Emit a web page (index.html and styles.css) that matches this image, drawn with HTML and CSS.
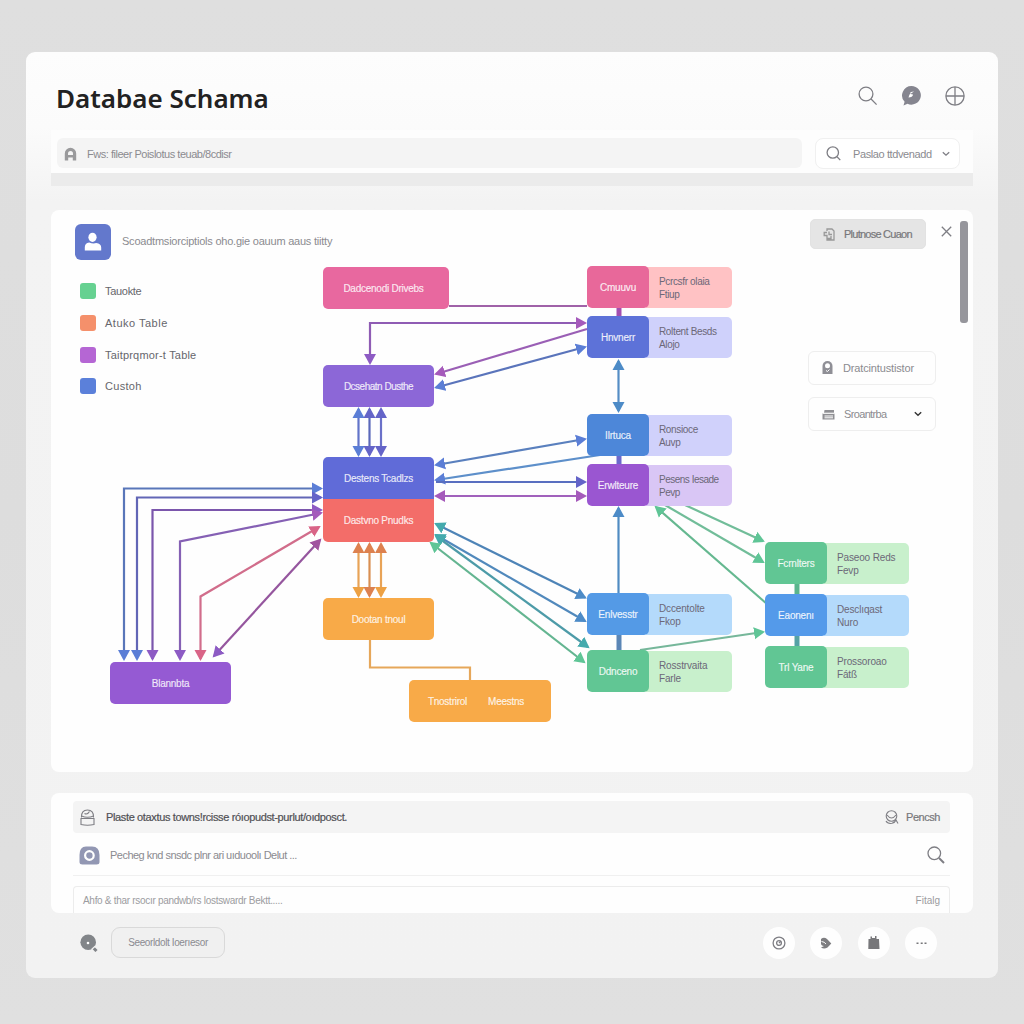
FILE: index.html
```html
<!DOCTYPE html>
<html lang="en">
<head>
<meta charset="utf-8">
<title>Databae Schama</title>
<link rel="stylesheet" href="styles.css">
</head>
<body>
<div class="window">
  <header class="header">
    <h1 class="title">Databae Schama</h1>
    <div class="header-icons">
      <svg width="20" height="20" viewBox="0 0 20 20"><circle cx="8" cy="8" r="6.900" class="line"/><path d="M12.800 12.800L18.600 18.600" class="line"/></svg>
      <svg width="21" height="21" viewBox="0 0 21 21"><path d="M10.500 1a9.500 9.300 0 1 1-4 17.800L2.500 20.500 3.600 16.800A9.400 9.400 0 0 1 10.500 1z" fill="#85858f"/><path d="M13 6.500C8 7 8 9 12 9.500c0 2-2 3-4.500 3l1-3" fill="#fff"/></svg>
      <svg width="20" height="20" viewBox="0 0 20 20"><circle cx="10" cy="10" r="9.100" class="line"/><path d="M10 1v18M1 10h18" class="line"/></svg>
    </div>
  </header>

  <div class="toolbar">
    <div class="search">
      <svg width="13" height="14" viewBox="0 0 13 14"><path d="M.8 13.500V6.500a5.700 5.700 0 0 1 11.400 0v7H8.800v-3H4.200v3z" fill="#9a9a9c"/><path d="M4 8V6.500a2.500 2.500 0 0 1 5 0V8z" fill="#f5f5f5"/></svg>
      <span class="t-search">Fws: fileer Poislotus teuab/8cdisr</span>
    </div>
    <div class="filter">
      <svg width="15" height="15" viewBox="0 0 15 15"><circle cx="6.800" cy="6.500" r="5.700" class="line"/><path d="M11 10.800l3.300 3.300" class="line"/></svg>
      <span class="t-filter">Paslao ttdvenadd</span>
      <svg width="8" height="6" viewBox="0 0 8 6"><path d="M.8 1.200L4 4.200 7.200 1.200" class="line"/></svg>
    </div>
  </div>
  <div class="strip"></div>

  <main class="panel">
    <div class="panel-top">
      <div class="user-badge"><svg width="18" height="20" viewBox="0 0 18 20"><ellipse cx="8.500" cy="5.300" rx="4.100" ry="4.600" fill="#fff"/><path d="M.8 18.500v-3.300q0-4 4.400-4.700 4 1.500 7 .5 5 .6 5 4.500v3z" fill="#fff"/></svg></div>
      <span class="t-sub">Scoadtmsiorciptiols oho.gie oauum aaus tiitty</span>
      <button class="primary"><svg width="12" height="13" viewBox="0 0 12 13"><path d="M4 3V1h5l2 2v9H4V9M4 4.500H1.200v3H4v3h4V8M6 3.500v3h3" class="line gear"/></svg><span class="t-primary">Plutnose Cuaon</span></button>
      <svg class="close" width="11" height="11" viewBox="0 0 11 11"><path d="M.8.8l9.400 9.400M10.200.8L.8 10.200" class="line"/></svg>
      <div class="scroll"></div>
    </div>
    <div class="panel-body">
      <ul class="legend">
        <li><i class="green"></i><span class="lg1">Tauokte</span></li>
        <li><i class="coral"></i><span class="lg2">Atuko Table</span></li>
        <li><i class="violet"></i><span class="lg3">Taitprqmor-t Table</span></li>
        <li><i class="azure"></i><span class="lg4">Custoh</span></li>
      </ul>
      <div class="side">
        <div class="side-box"><svg width="11" height="14" viewBox="0 0 11 14"><path d="M.5 13V5a5 5 0 0 1 10 0v8z" fill="#8f8f96"/><circle cx="5.500" cy="4.700" r="2.500" fill="#fff"/><path d="M4 9.500l1.500 1 2-2" stroke="#fff" fill="none"/></svg><span class="s1">Dratcintustistor</span></div>
        <div class="side-box"><svg width="13" height="11" viewBox="0 0 13 11"><path d="M2.500 1h9.500v3H2zM.5 4.500h12v6H.5z" fill="#8f8f93"/><path d="M2.500 7h8.500M1 4.200h11.500M2.500 8.800h8.500" stroke="#fff"/></svg><span class="s2">Sroantrba</span><svg class="chev" width="8" height="6" viewBox="0 0 8 6"><path d="M.8 1.200L4 4.200 7.200 1.200" fill="none" stroke="#333" stroke-width="1.400"/></svg></div>
      </div>
    </div>

    <svg class="wires" width="922" height="562" viewBox="51 210 922 562">
      <defs>
        <marker id="a-blue" markerUnits="userSpaceOnUse" markerWidth="12" markerHeight="14" refX="9" refY="6.500" orient="auto-start-reverse"><path d="M0 .5L11 6.500 0 12.500z" fill="#5b7ed6"/></marker>
        <marker id="a-indigo" markerUnits="userSpaceOnUse" markerWidth="12" markerHeight="14" refX="9" refY="6.500" orient="auto-start-reverse"><path d="M0 .5L11 6.500 0 12.500z" fill="#6464c8"/></marker>
        <marker id="a-purple" markerUnits="userSpaceOnUse" markerWidth="12" markerHeight="14" refX="9" refY="6.500" orient="auto-start-reverse"><path d="M0 .5L11 6.500 0 12.500z" fill="#8d5bc4"/></marker>
        <marker id="a-violet" markerUnits="userSpaceOnUse" markerWidth="12" markerHeight="14" refX="9" refY="6.500" orient="auto-start-reverse"><path d="M0 .5L11 6.500 0 12.500z" fill="#a55abb"/></marker>
        <marker id="a-plum" markerUnits="userSpaceOnUse" markerWidth="12" markerHeight="14" refX="9" refY="6.500" orient="auto-start-reverse"><path d="M0 .5L11 6.500 0 12.500z" fill="#a0539f"/></marker>
        <marker id="a-rose" markerUnits="userSpaceOnUse" markerWidth="12" markerHeight="14" refX="9" refY="6.500" orient="auto-start-reverse"><path d="M0 .5L11 6.500 0 12.500z" fill="#d96487"/></marker>
        <marker id="a-orange" markerUnits="userSpaceOnUse" markerWidth="12" markerHeight="14" refX="9" refY="6.500" orient="auto-start-reverse"><path d="M0 .5L11 6.500 0 12.500z" fill="#eda144"/></marker>
        <marker id="a-rust" markerUnits="userSpaceOnUse" markerWidth="12" markerHeight="14" refX="9" refY="6.500" orient="auto-start-reverse"><path d="M0 .5L11 6.500 0 12.500z" fill="#dd814f"/></marker>
        <marker id="a-steel" markerUnits="userSpaceOnUse" markerWidth="12" markerHeight="14" refX="9" refY="6.500" orient="auto-start-reverse"><path d="M0 .5L11 6.500 0 12.500z" fill="#4d8bc7"/></marker>
        <marker id="a-teal" markerUnits="userSpaceOnUse" markerWidth="12" markerHeight="14" refX="9" refY="6.500" orient="auto-start-reverse"><path d="M0 .5L11 6.500 0 12.500z" fill="#44aaad"/></marker>
        <marker id="a-green" markerUnits="userSpaceOnUse" markerWidth="12" markerHeight="14" refX="9" refY="6.500" orient="auto-start-reverse"><path d="M0 .5L11 6.500 0 12.500z" fill="#5fc596"/></marker>
      </defs>
      <g fill="none" stroke-width="2.200">
        <path d="M449 306H587" stroke="#a062a8"/>
        <path d="M370 363V323H585" stroke="#8f5cb4" marker-start="url(#a-purple)" marker-end="url(#a-violet)"/>
        <path d="M587 329L436 374" stroke="#9a5fb5" marker-end="url(#a-violet)"/>
        <path d="M585 347L436 387.500" stroke="#5a74bb" marker-start="url(#a-blue)" marker-end="url(#a-blue)"/>
        <path d="M358.500 409V455" stroke="#6274c9" marker-start="url(#a-blue)" marker-end="url(#a-blue)"/>
        <path d="M369.500 409V455" stroke="#5a68ba" marker-start="url(#a-indigo)" marker-end="url(#a-indigo)"/>
        <path d="M381 409V455" stroke="#6a70c8" marker-start="url(#a-indigo)" marker-end="url(#a-indigo)"/>
        <path d="M436 465L585 439" stroke="#5a80be" marker-start="url(#a-blue)" marker-end="url(#a-blue)"/>
        <path d="M436 480L600 455" stroke="#5d8fca" marker-start="url(#a-blue)"/>
        <path d="M436 482H585" stroke="#596fc0" marker-end="url(#a-indigo)"/>
        <path d="M436 496H585" stroke="#a161bc" marker-start="url(#a-violet)" marker-end="url(#a-violet)"/>
        <path d="M124 659V488.500H321" stroke="#5976b9" marker-start="url(#a-blue)" marker-end="url(#a-blue)"/>
        <path d="M137 659V497.500H321" stroke="#6266b6" marker-start="url(#a-blue)" marker-end="url(#a-indigo)"/>
        <path d="M152.500 659V510H321" stroke="#7b56ac" marker-start="url(#a-purple)" marker-end="url(#a-purple)"/>
        <path d="M180 659V541.500L321 513" stroke="#8560b4" marker-start="url(#a-purple)" marker-end="url(#a-violet)"/>
        <path d="M200.500 659V596.500L319 527" stroke="#d16d8b" marker-start="url(#a-rose)" marker-end="url(#a-rose)"/>
        <path d="M214 656L320 540" stroke="#95569e" marker-start="url(#a-purple)" marker-end="url(#a-plum)"/>
        <path d="M358.500 544V596" stroke="#e8a357" marker-start="url(#a-rust)" marker-end="url(#a-orange)"/>
        <path d="M369.500 544V596" stroke="#d98f52" marker-start="url(#a-rust)" marker-end="url(#a-rust)"/>
        <path d="M381 544V596" stroke="#e8a357" marker-start="url(#a-rust)" marker-end="url(#a-orange)"/>
        <path d="M370 640V667.500H470V680" stroke="#e6a75a"/>
        <path d="M618.500 361V411" stroke="#558dc5" marker-start="url(#a-steel)" marker-end="url(#a-steel)"/>
        <path d="M618.500 594V508" stroke="#508bc2" marker-end="url(#a-steel)"/>
        <path d="M436 524L585 597.500" stroke="#4e84b7" marker-start="url(#a-teal)" marker-end="url(#a-steel)"/>
        <path d="M436 535L585 621" stroke="#5189bc" marker-start="url(#a-teal)" marker-end="url(#a-steel)"/>
        <path d="M436 536L588 647" stroke="#4d9ba8" marker-start="url(#a-teal)" marker-end="url(#a-teal)"/>
        <path d="M431 543L584 662" stroke="#64b591" marker-start="url(#a-green)" marker-end="url(#a-green)"/>
        <path d="M685 505L763 541" stroke="#71bd99" marker-end="url(#a-green)"/>
        <path d="M665 505L763 562" stroke="#71bd99" marker-end="url(#a-green)"/>
        <path d="M656 507L767 604" stroke="#65b890" marker-start="url(#a-green)"/>
        <path d="M640 650L763 632" stroke="#76b79a" marker-end="url(#a-green)"/>
        <path d="M619 308V317" stroke="#a44fb0" stroke-width="5"/>
        <path d="M619 456V465" stroke="#6c69cc" stroke-width="5"/>
        <path d="M619 635V651" stroke="#5b86b6" stroke-width="5"/>
        <path d="M797 583V595" stroke="#5ab58d" stroke-width="5"/>
        <path d="M797 636V647" stroke="#55a2a5" stroke-width="5"/>
      </g>
    </svg>

    <div class="node n1"><span>Dadcenodi Drivebs</span></div>
    <div class="node n2"><span>Dcsehatn Dusthe</span></div>
    <div class="node n3"><span>Destens Tcadlzs</span></div>
    <div class="node n4"><span>Dastvno Pnudks</span></div>
    <div class="node n5"><span>Dootan tnoul</span></div>
    <div class="node n6"><span>Tnostrirol</span><span>Meestns</span></div>
    <div class="node n7"><span>Blannbta</span></div>

    <div class="pair p1"><b>Cmuuvu</b><p><span>Pcrcsfr olaia</span><br><span>Ftiup</span></p></div>
    <div class="pair p2"><b>Hnvnerr</b><p><span>Roltent Besds</span><br><span>Alojo</span></p></div>
    <div class="pair p3"><b>Ilrtuca</b><p><span>Ronsioce</span><br><span>Auvp</span></p></div>
    <div class="pair p4"><b>Erwlteure</b><p><span>Pesens Iesade</span><br><span>Pevp</span></p></div>
    <div class="pair p5"><b>Enlvesstr</b><p><span>Dccentolte</span><br><span>Fkop</span></p></div>
    <div class="pair p6"><b>Ddnceno</b><p><span>Rosstrvaita</span><br><span>Farle</span></p></div>
    <div class="pair p7"><b>Fcrnlters</b><p><span>Paseoo Reds</span><br><span>Fevp</span></p></div>
    <div class="pair p8"><b>Eaonenı</b><p><span>Desclıqast</span><br><span>Nuro</span></p></div>
    <div class="pair p9"><b>Trl Yane</b><p><span>Prossoroao</span><br><span>Fátß</span></p></div>
  </main>

  <section class="log">
    <div class="row row-head">
      <svg width="15" height="17" viewBox="0 0 15 17"><path d="M1.500 8.500Q1.200 1 7.500 1t6 7.500M1.500 7Q7.500 9.500 13.500 7M1 9.500h13v6q-6.500 1.500-13 0zM4.500 4.500q3 1.500 5-2" class="line thin"/></svg>
      <span class="t-head">Plaste otaxtus towns!rcisse róıopudst-purlut/oıdposct.</span>
      <svg class="right" width="14" height="15" viewBox="0 0 14 15"><circle cx="6.500" cy="6" r="5.300" class="line thin"/><path d="M2 5q4.500 6 9 0M1 11q1.500 3 6 2.300 3-.8 4-3.300l2 3.500" class="line thin"/></svg>
      <span class="t-refresh">Pencsh</span>
    </div>
    <div class="row row-mid">
      <svg width="21" height="19" viewBox="0 0 21 19"><path d="M.5 9Q.5.500 7 .5h6Q20.500.500 20.500 9v7q0 2.500-3 2.500h-14q-3 0-3-2.500z" fill="#9297b3"/><circle cx="10.400" cy="9.500" r="4.300" fill="none" stroke="#fff" stroke-width="2.200"/></svg>
      <span class="t-mid">Pecheg knd snsdc plnr ari uıduoolı Delut ...</span>
      <svg class="right" width="18" height="18" viewBox="0 0 18 18"><circle cx="7.300" cy="7.300" r="6.300" class="line"/><path d="M12 12l5 5" class="line thick"/></svg>
    </div>
    <div class="row row-last">
      <span class="t-last">Ahfo &amp; thar rsocır pandwb/rs lostswardr Bektt.....</span>
      <span class="right t-file">Fitalg</span>
    </div>
  </section>

  <footer class="footer">
    <svg width="18" height="18" viewBox="0 0 18 18"><circle cx="8.200" cy="8.200" r="7.800" fill="#828589"/><circle cx="8" cy="9" r="1.300" fill="#fff"/><path d="M13 13.500l3.500 3.500" stroke="#828589" stroke-width="3" fill="none"/><path d="M11.500 15.500l4-3.500" stroke="#f2f2f2" stroke-width="1.200"/></svg>
    <button class="ghost"><span>Seeorldolt Ioerıesor</span></button>
    <div class="actions">
      <div class="round"><svg width="14" height="14" viewBox="0 0 14 14"><circle cx="7" cy="7" r="5.900" class="line"/><circle cx="7" cy="7" r="2.400" class="line"/><path d="M7 7l2-2" class="line"/></svg></div>
      <div class="round"><svg width="12" height="12" viewBox="0 0 12 12"><path d="M1 2q3-2.500 6 0l4.300 4.500L7.500 10.500Q4 12.500 1 10.500L4 9Q1 8.500 1 6.500z" fill="#7e7e81"/><path d="M1.500 4.500q3 .3 4.500 2.500" stroke="#fff" fill="none"/></svg></div>
      <div class="round"><svg width="12" height="15" viewBox="0 0 12 15"><path d="M.5 4h2V1.500h1.500V3h3V1h1.500v3h2.500l.5 10H.3z" fill="#77777a"/></svg></div>
      <div class="round"><svg width="11" height="4" viewBox="0 0 11 4"><path d="M.5 1.500h2v1.500h-2zM4.700 1.500h2v1.500h-2zM8.500 1.500h2v1.500h-2z" fill="#77777a"/></svg></div>
    </div>
  </footer>
</div>
</body>
</html>
```
FILE: styles.css
```css
* { box-sizing: border-box; }
body {
  margin: 0;
  height: 1024px;
  padding: 52px 26px 46px;
  background: linear-gradient(#dfdfdf, #dddddd 50%, #e0e0e0);
  font-family: "Liberation Sans", Arial, sans-serif;
  font-size: 11px;
  color: #8b8b90;
  overflow: hidden;
}
svg { display: block; flex: none; }
span { white-space: nowrap; }
button { font: inherit; color: inherit; border: 0; }
.line { fill: none; stroke: #7e7e84; stroke-width: 1.3; }
.thin { stroke-width: 1.1; }
.thick { stroke-width: 2; }
.gear { stroke: #999; }

.window {
  height: 926px;
  padding: 0 25px;
  display: flex;
  flex-direction: column;
  border-radius: 9px;
  background: linear-gradient(#fdfdfd, #fbfbfb 75px, #f3f3f3 150px, #f2f2f2);
}
.header {
  height: 78px;
  padding: 9px 8px 0 5px;
  display: flex;
  align-items: center;
  justify-content: space-between;
}
.title {
  margin: 5px 0 0;
  font: 600 26px "Noto Sans", sans-serif;
  color: #222;
  white-space: nowrap;
}
.header-icons { display: flex; gap: 23px; align-items: center; }

.toolbar {
  height: 43px;
  padding: 8px 13px 4px 6px;
  display: flex;
  gap: 13px;
  background: #fdfdfd;
}
.search {
  flex: 1;
  height: 30px;
  padding: 2px 7px 0;
  display: flex;
  align-items: center;
  gap: 10px;
  border-radius: 6px;
  background: #f4f4f4;
}
.t-search { letter-spacing: -.48px; }
.filter {
  width: 145px;
  height: 31px;
  padding: 0 9px 0 10px;
  display: flex;
  align-items: center;
  border: 1px solid #f0f0f0;
  border-radius: 8px;
  background: #fff;
}
.t-filter { margin: 0 auto 0 12px; letter-spacing: -.4px; }
.strip { height: 13px; background: #ebebeb; }

.panel {
  position: relative;
  height: 562px;
  margin-top: 24px;
  border-radius: 8px;
  background: #fefefe;
}
.panel-top {
  height: 62px;
  padding: 9px 5px 0 24px;
  display: flex;
  align-items: flex-start;
}
.user-badge {
  width: 36px;
  height: 36px;
  margin-top: 5px;
  display: flex;
  align-items: center;
  justify-content: center;
  border-radius: 6px;
  background: #6378cc;
}
.t-sub { margin: 16px auto 0 11px; letter-spacing: -.22px; }
.primary {
  width: 116px;
  height: 30px;
  padding: 0 12px;
  display: flex;
  align-items: center;
  gap: 9px;
  border: 1px solid #e2e2e2;
  border-radius: 5px;
  background: #e5e5e5;
  color: #77777a;
}
.t-primary { letter-spacing: -.75px; -webkit-text-stroke: .2px currentColor; }
.close { margin: 7px 8px 0 15px; }
.scroll {
  width: 8px;
  height: 102px;
  margin-top: 2px;
  border-radius: 3px;
  background: #96969c;
}
.panel-body {
  padding: 0 37px 0 29px;
  display: flex;
  justify-content: space-between;
}
.legend { margin: 11px 0 0; padding: 0; list-style: none; }
.legend li { height: 31.8px; display: flex; gap: 9px; align-items: flex-start; color: #66666c; line-height: 16px; }
.legend i { width: 16px; height: 16px; border-radius: 3px; }
.lg1 { letter-spacing: -.3px; }
.lg2 { letter-spacing: .5px; }
.lg3 { letter-spacing: .2px; }
.lg4 { letter-spacing: .3px; }
.green { background: #66d191; }
.coral { background: #f5906b; }
.violet { background: #b566d4; }
.azure { background: #5b80da; }
.side { padding-top: 79px; display: flex; flex-direction: column; gap: 12px; }
.side-box {
  width: 128px;
  height: 34px;
  padding: 0 13px;
  display: flex;
  align-items: center;
  gap: 9px;
  border: 1px solid #eee;
  border-radius: 6px;
}
.s1 { margin-left: 1px; letter-spacing: -.15px; }
.s2 { letter-spacing: -.65px; }
.chev { margin-left: auto; }

.wires { position: absolute; left: 0; top: 0; }
.node, .pair { position: absolute; height: 42px; display: flex; }
.node {
  width: 111px;
  align-items: center;
  justify-content: center;
  border-radius: 5px;
  color: rgba(255, 255, 255, .82);
  font-size: 10px;
  letter-spacing: -.25px;
}
.node span { -webkit-text-stroke: .2px currentColor; }
.n1 { left: 272px; top: 57px; width: 126px; background: #e8689f; padding-right: 5px; }
.n2 { left: 272px; top: 155px; background: #8c67d7; letter-spacing: -.5px; }
.n3 { left: 272px; top: 247px; background: #606bd8; border-radius: 5px 5px 0 0; }
.n4 { left: 272px; top: 289px; height: 43px; background: #f36d69; border-radius: 0 0 5px 5px; }
.n5 { left: 272px; top: 388px; background: #f8aa48; }
.n6 { left: 358px; top: 470px; width: 142px; gap: 21px; padding-right: 8px; background: #f8aa48; }
.n7 { left: 59px; top: 452px; width: 121px; background: #955ad3; }

.pair { left: 536px; width: 145px; font-size: 10px; }
.pair b {
  z-index: 1;
  width: 62px;
  display: flex;
  align-items: center;
  justify-content: center;
  border-radius: 5px;
  background: var(--key);
  color: rgba(255, 255, 255, .85);
  font-weight: 400;
  letter-spacing: -.2px;
  -webkit-text-stroke: .2px currentColor;
}
.pair p {
  flex: 1;
  margin: 1px 0 0 -3px;
  padding: 8px 0 0 13px;
  border-radius: 0 5px 5px 0;
  background: var(--tint);
  color: #6c6878;
  line-height: 13px;
  letter-spacing: -.35px;
}
.p1 { top: 56px; --key: #e8689a; --tint: #ffc2c4; }
.p2 { top: 106px; --key: #5d72d8; --tint: #cfd1fb; }
.p3 { top: 204px; --key: #4d87d9; --tint: #d0d1fb; }
.p4 { top: 254px; --key: #9a56d1; --tint: #d9c6f5; }
.p5 { top: 383px; --key: #549ae6; --tint: #b4dafb; }
.p6 { top: 440px; --key: #61c694; --tint: #c8f0cc; }
.p7, .p8, .p9 { left: 714px; width: 144px; }
.p7 { top: 332px; --key: #61c694; --tint: #c8f0cc; }
.p8 { top: 384px; --key: #549aea; --tint: #b4dafb; }
.p9 { top: 436px; --key: #61c694; --tint: #c8f0cc; }
.p4 p { letter-spacing: -.5px; }
.p5 p, .p6 p, .p7 p, .p8 p, .p9 p { letter-spacing: -.15px; }

.log {
  height: 120px;
  margin-top: 21px;
  padding: 8px 23px 0 22px;
  border-radius: 8px;
  background: #fefefe;
}
.row { display: flex; align-items: center; }
.right { margin-left: auto; }
.row-head { height: 32px; padding: 0 10px 0 7px; background: #f4f4f4; border-radius: 4px; }
.t-head { margin-left: 11px; color: #505054; letter-spacing: -.36px; -webkit-text-stroke: .2px currentColor; }
.t-refresh { margin-left: 7px; color: #77777a; letter-spacing: -.45px; -webkit-text-stroke: .2px currentColor; }
.row-mid { height: 43px; padding: 2px 5px 0 6px; border-bottom: 1px solid #f0f0f0; }
.t-mid { margin-left: 10px; letter-spacing: -.52px; }
.row-last {
  height: 27px;
  margin-top: 10px;
  padding: 0 9px;
  border: 1px solid #ececec;
  border-bottom: 0;
  border-radius: 4px 4px 0 0;
  color: #9c9ca0;
  font-size: 10px;
}
.t-last { letter-spacing: -.3px; }

.footer { height: 59px; padding: 0 36px 0 29px; display: flex; align-items: center; }
.ghost {
  width: 114px;
  height: 31px;
  margin-left: 13px;
  padding: 0;
  border: 1px solid #d9d9d9;
  border-radius: 9px;
  background: #f0f0f0;
  font-size: 10px;
  letter-spacing: -.38px;
}
.actions { margin-left: auto; display: flex; gap: 15.5px; }
.round {
  width: 32px;
  height: 32px;
  display: flex;
  align-items: center;
  justify-content: center;
  border-radius: 50%;
  background: #fefefe;
}
```
